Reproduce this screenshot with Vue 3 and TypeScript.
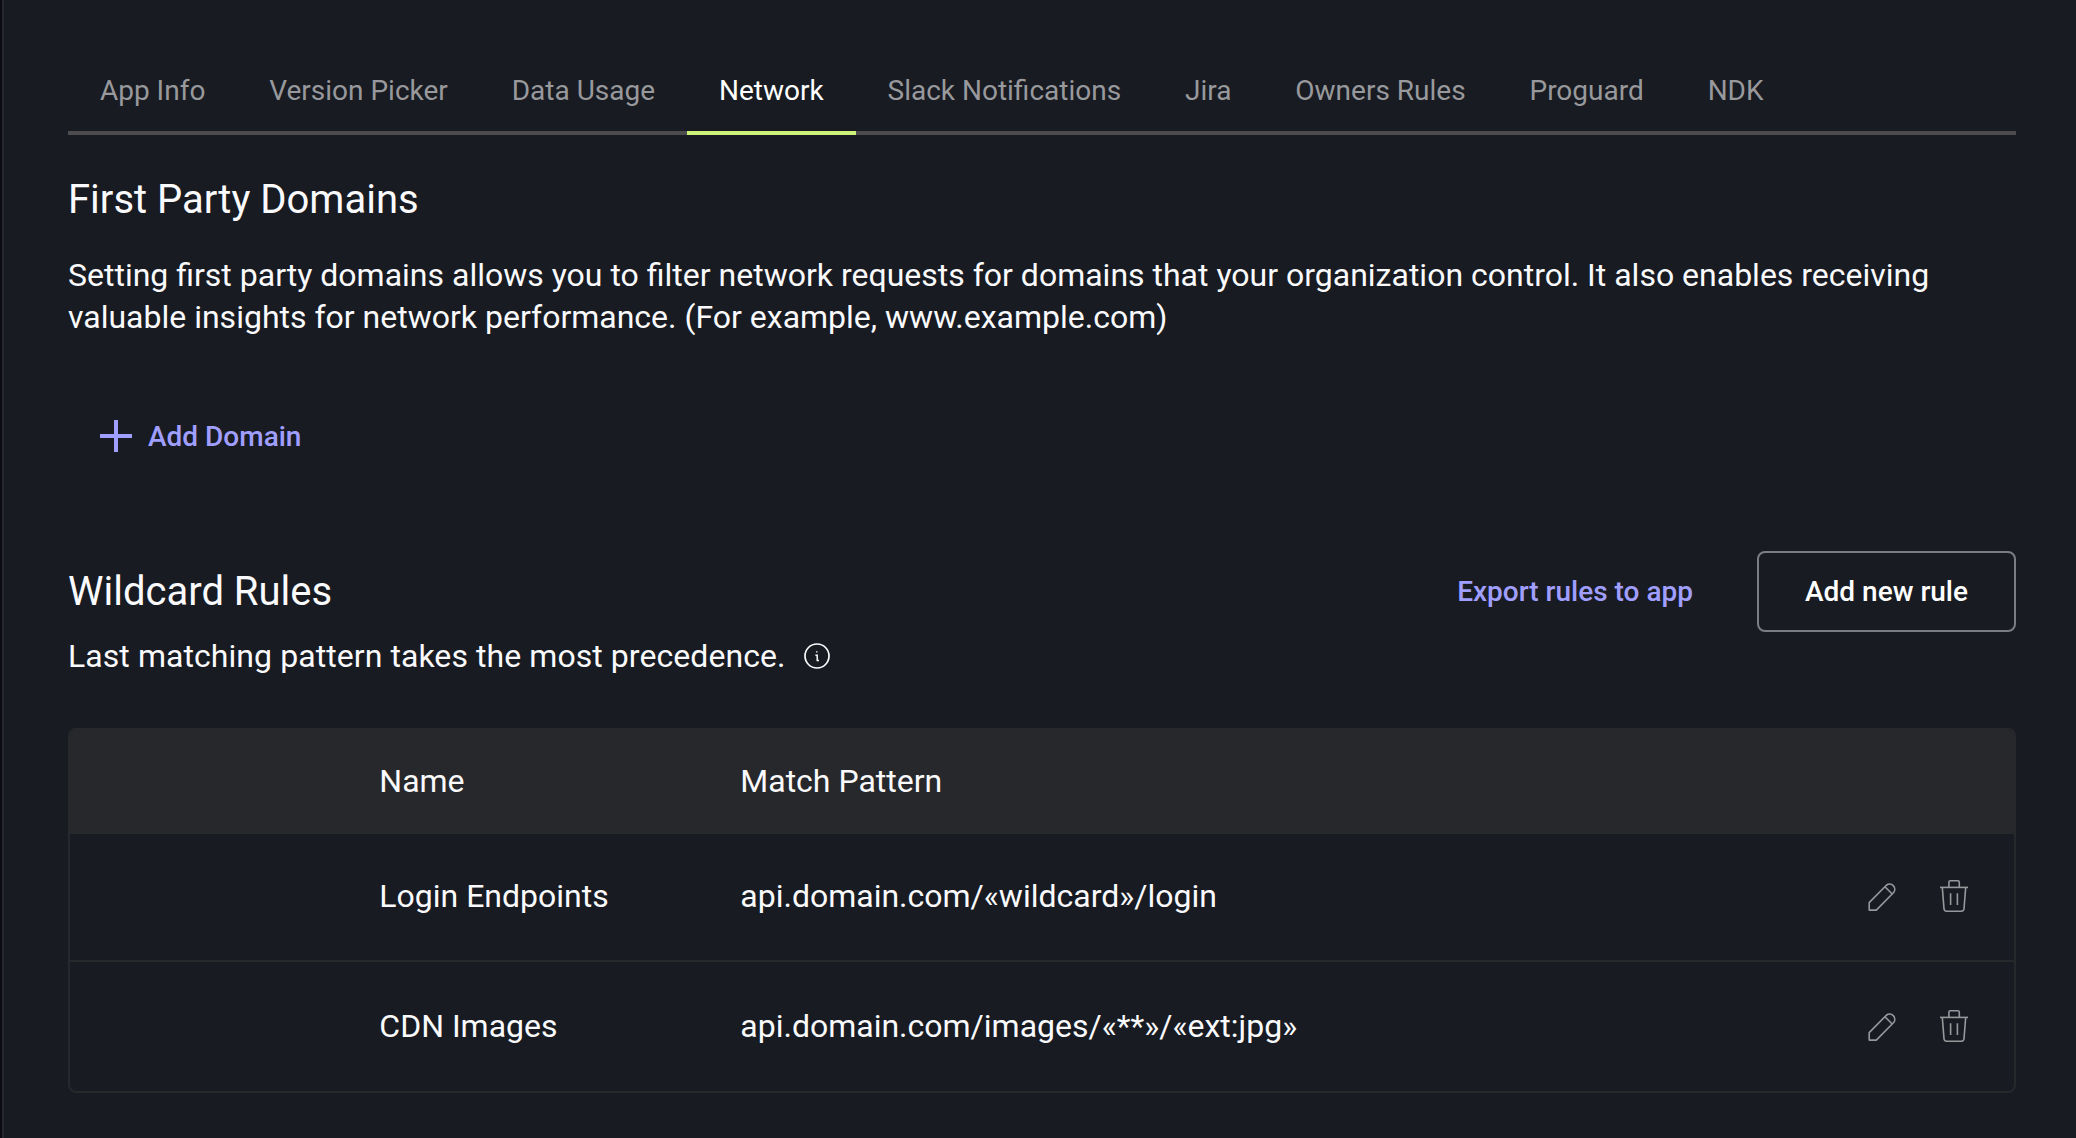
<script setup lang="ts">
interface Rule {
  name: string
  pattern: string
}

const tabs: string[] = [
  'App Info',
  'Version Picker',
  'Data Usage',
  'Network',
  'Slack Notifications',
  'Jira',
  'Owners Rules',
  'Proguard',
  'NDK',
]
const activeTab = 'Network'

const rules: Rule[] = [
  { name: 'Login Endpoints', pattern: 'api.domain.com/«wildcard»/login' },
  { name: 'CDN Images', pattern: 'api.domain.com/images/«**»/«ext:jpg»' },
]
</script>

<template>
  <main class="page">
    <nav class="tabs">
      <a v-for="tab in tabs" :key="tab" class="tab" :class="{ active: tab === activeTab }">{{ tab }}</a>
    </nav>

    <section class="domains">
      <h2 class="title">First Party Domains</h2>
      <p class="text">
        Setting first party domains allows you to filter network requests for domains that your organization control. It
        also enables receiving valuable insights for network performance. (For example, www.example.com)
      </p>
      <button class="add-domain" type="button">
        <svg width="32" height="32" viewBox="0 0 32 32" fill="none" stroke="currentColor" stroke-width="4">
          <path d="M16 0V32M0 16H32" />
        </svg>
        <span>Add Domain</span>
      </button>
    </section>

    <section class="rules">
      <header class="rules-head">
        <h2 class="title">Wildcard Rules</h2>
        <div class="actions">
          <button class="link" type="button">Export rules to app</button>
          <button class="outlined" type="button">Add new rule</button>
        </div>
      </header>
      <p class="hint">
        <span>Last matching pattern takes the most precedence.</span>
        <svg width="26" height="26" viewBox="0 0 26 26" fill="none" stroke="currentColor">
          <circle cx="13" cy="13" r="12" stroke-width="1.7" />
          <path d="M11.4 12.3H13.2V17.4M12.6 17.4H15" stroke-width="1.5" />
          <circle cx="12.8" cy="8.8" r="0.9" fill="currentColor" stroke="none" opacity="0.8" />
        </svg>
      </p>

      <div class="table">
        <div class="row head">
          <span>Name</span>
          <span>Match Pattern</span>
        </div>
        <div v-for="rule in rules" :key="rule.name" class="row">
          <span>{{ rule.name }}</span>
          <span>{{ rule.pattern }}</span>
          <div class="icons">
            <svg width="28" height="30" viewBox="0 -1.5 28 30" fill="none" stroke="currentColor" stroke-width="1.6" stroke-linejoin="round">
              <path d="M1.2 27.6V20.1L18.35 2.75A5.2 5.2 0 0 1 25.65 10.05L8.3 27.6Z" />
              <path d="M16.9 4.2L24.2 11.5" />
            </svg>
            <svg width="28" height="32" viewBox="0 0 28 32" fill="none" stroke="currentColor" stroke-width="1.6">
              <path d="M0 7.4H28" />
              <path d="M8.9 7.4V2.2A1.4 1.4 0 0 1 10.3 0.8H17.9A1.4 1.4 0 0 1 19.3 2.2V7.4" />
              <path d="M2.3 7.4L4 28.8A2.6 2.6 0 0 0 6.6 31.2H21.4A2.6 2.6 0 0 0 24 28.8L25.7 7.4" />
              <path d="M10.6 13.2V25M17.4 13.2V25" />
            </svg>
          </div>
        </div>
      </div>
    </section>
  </main>
</template>

<style>
html,
body {
  margin: 0;
  background: #181b22;
}
</style>

<style scoped>
.page {
  box-sizing: border-box;
  width: 2076px;
  height: 1138px;
  padding: 49px 60px 0 66px;
  overflow: hidden;
  background: #181b22;
  border-left: 2px solid #0a0b15;
  box-shadow: inset 2px 0 #25272c;
  color: #fafafc;
  font-family: Roboto, 'Liberation Sans', sans-serif;
  font-size: 32px;
}

.tabs {
  display: flex;
  height: 86px;
  box-sizing: border-box;
  box-shadow: inset 0 -4px #4c4c4e;
}

.tab {
  box-sizing: border-box;
  height: 86px;
  padding: 0 31.95px;
  font-size: 28px;
  line-height: 83px;
  color: #98999c;
  white-space: nowrap;
}

.tab.active {
  color: #fff;
  box-shadow: inset 0 -4px #cdf27a;
}

.title {
  margin: 0;
  padding-top: 1px;
  font-size: 40px;
  font-weight: 400;
  line-height: 48px;
}

.domains {
  padding-top: 40px;
}

.text {
  margin: 30px 0 0;
  line-height: 42px;
}

button {
  margin: 0;
  padding: 1px 0 0;
  border: 0;
  background: none;
  color: #a09fff;
  font: 500 28px/34px Roboto, 'Liberation Sans', sans-serif;
  white-space: nowrap;
}

.add-domain {
  display: flex;
  align-items: center;
  gap: 16px;
  margin: 80px 0 0 32px;
  padding: 0;
}

.add-domain span {
  padding-top: 2px;
}

.add-domain svg {
  display: block;
}

.rules {
  padding-top: 97px;
}

.rules-head {
  display: flex;
  align-items: center;
  justify-content: space-between;
  height: 81px;
}

.actions {
  display: flex;
  align-items: center;
  gap: 64px;
}

.outlined {
  box-sizing: border-box;
  width: 259px;
  height: 81px;
  border: 2px solid #7c7d83;
  border-radius: 8px;
  color: #fff;
}

.hint {
  display: flex;
  align-items: center;
  gap: 18.5px;
  height: 42px;
  margin: 3px 0 0;
  line-height: 42px;
  letter-spacing: 0.065px;
}

.table {
  box-sizing: border-box;
  height: 365px;
  margin-top: 51px;
  border: 2px solid #27282b;
  border-radius: 8px;
  overflow: hidden;
}

.row {
  display: grid;
  grid-template-columns: 361px 1fr auto;
  align-items: center;
  box-sizing: border-box;
  height: 128px;
  padding: 0 46px 2px 309.3px;
  border-bottom: 2px solid #27282b;
  line-height: 42px;
}

.row:last-child {
  height: 129px;
  padding-bottom: 1px;
  border-bottom: 0;
}

.row.head {
  height: 104px;
  border-bottom: 0;
  background: #27282b;
}

.icons {
  display: flex;
  align-items: center;
  gap: 44.5px;
  color: #97989c;
}

.icons svg {
  display: block;
}
</style>
